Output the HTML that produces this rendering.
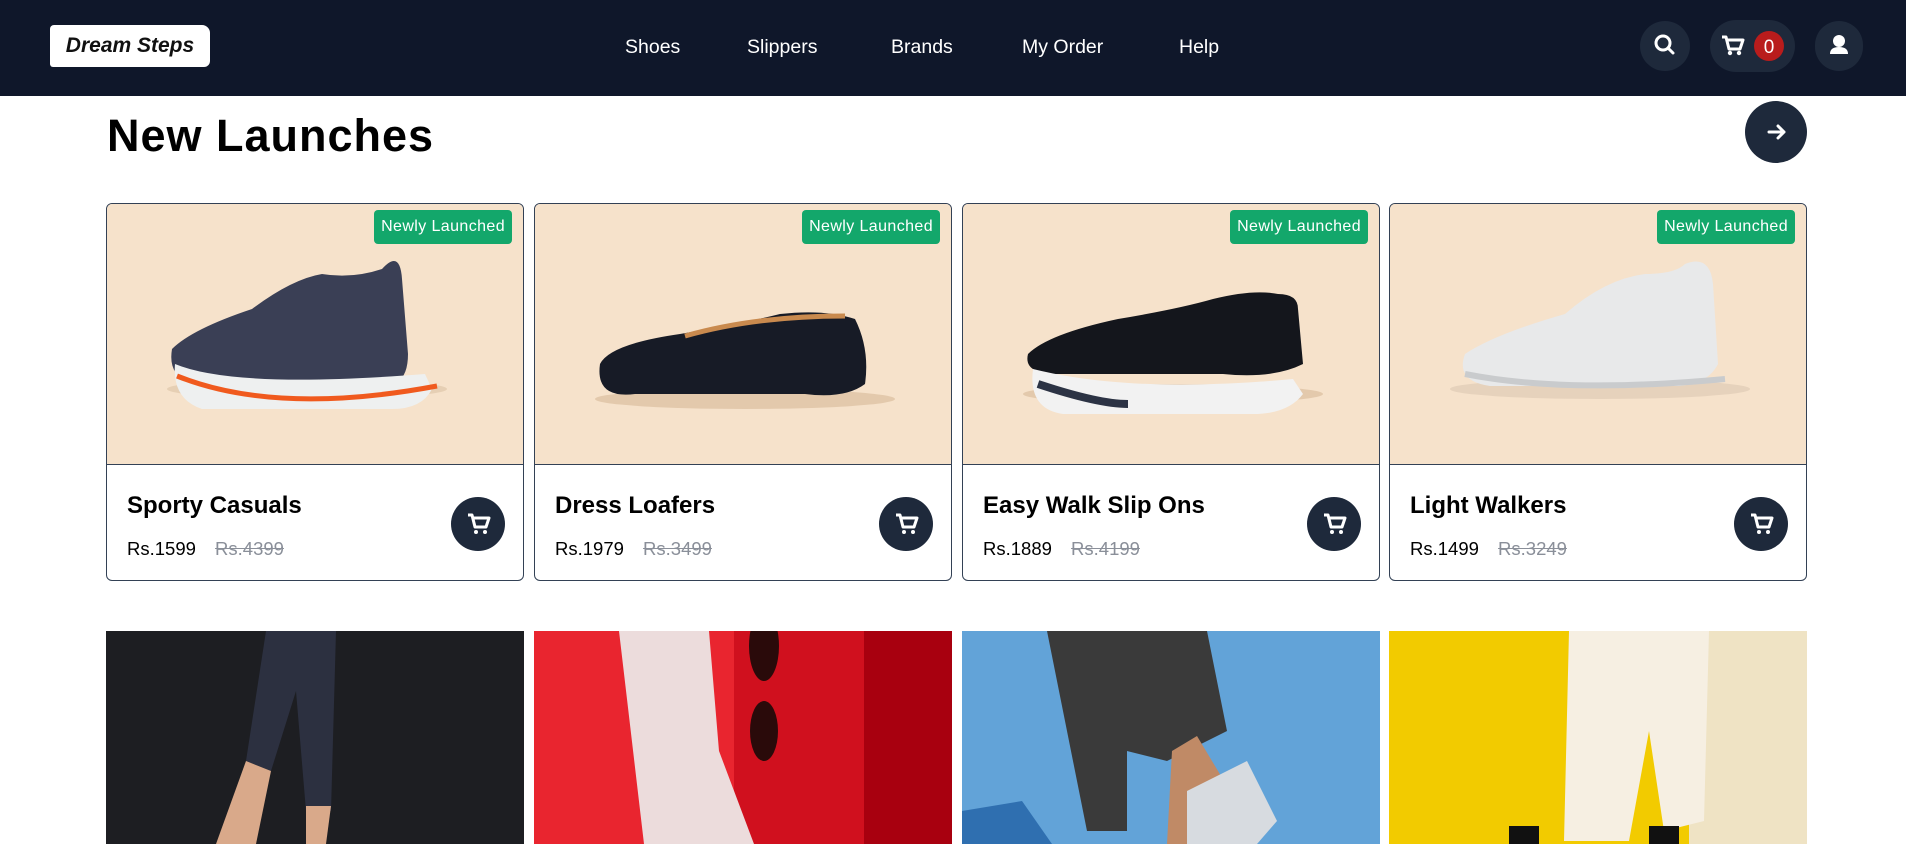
<!DOCTYPE html>
<html><head><meta charset="utf-8"><style>
*{margin:0;padding:0;box-sizing:border-box}
body{width:1906px;height:844px;overflow:hidden;background:#fff;font-family:"Liberation Sans",sans-serif;position:relative}
.hdr{position:absolute;left:0;top:0;width:1906px;height:96px;background:#0f172a}
.logo{position:absolute;left:50px;top:25px;width:160px;height:42px;background:#fff;border-radius:4px 8px 6px 3px;font:italic bold 21px "Liberation Sans",sans-serif;color:#111;text-align:center;line-height:42px}
.nav a{position:absolute;top:36px;color:#fff;font-size:19.5px;text-decoration:none}
.ic{position:absolute;background:#1e293b;border-radius:26px}
.ttl{position:absolute;left:107px;top:110px;font-size:45px;font-weight:bold;color:#000;letter-spacing:1px}
.arr{position:absolute;left:1745px;top:101px;width:62px;height:62px;border-radius:50%;background:#1e293b}
.card{position:absolute;top:203px;width:418px;height:378px;border:1px solid #334155;border-radius:6px;overflow:hidden}
.img{height:261px;background:#f6e2cb;border-bottom:1px solid #334155;position:relative}
.badge{position:absolute;right:11px;top:6px;height:34px;padding:0 7px;background:#13a76b;color:#fff;font-size:16px;line-height:34px;border-radius:4px;letter-spacing:.4px}
.name{position:absolute;left:20px;top:288px;font-size:24px;font-weight:bold;color:#000}
.pr{position:absolute;left:20px;top:334px;font-size:18.5px;color:#000}
.pr s{color:#8a8f99;margin-left:14px}
.cb{position:absolute;left:344px;top:293px;width:54px;height:54px;border-radius:50%;background:#1e293b}
.bot{position:absolute;top:631px;width:418px;height:213px;overflow:hidden}
</style></head><body>
<div class="hdr">
<div class="logo">Dream Steps</div>
<div class="nav"><a style="left:625px">Shoes</a><a style="left:747px">Slippers</a><a style="left:891px">Brands</a><a style="left:1022px">My Order</a><a style="left:1179px">Help</a></div>
<div class="ic" style="left:1640px;top:21px;width:50px;height:50px"><svg width="50" height="50"><circle cx="23" cy="22" r="7" fill="none" stroke="#fff" stroke-width="3"/><line x1="28" y1="27" x2="33" y2="32" stroke="#fff" stroke-width="3" stroke-linecap="round"/></svg></div>
<div class="ic" style="left:1710px;top:20px;width:85px;height:52px"><svg width="85" height="52"><path d="M12 17h4l3 12h11l3-9H18" fill="none" stroke="#fff" stroke-width="3" stroke-linejoin="round"/><circle cx="20" cy="33" r="2.2" fill="#fff"/><circle cx="29" cy="33" r="2.2" fill="#fff"/><circle cx="59" cy="26" r="15" fill="#b91c1c"/><text x="59" y="33" fill="#fff" font-size="19" text-anchor="middle" font-family="Liberation Sans">0</text></svg></div>
<div class="ic" style="left:1815px;top:21px;width:48px;height:50px"><svg width="48" height="50"><circle cx="24" cy="20" r="6" fill="#fff"/><path d="M15 33q0-7 9-7t9 7z" fill="#fff"/></svg></div>
</div>
<div class="ttl">New Launches</div>
<div class="arr"><svg width="62" height="62"><path d="M24 31h15M33 25l6 6-6 6" fill="none" stroke="#fff" stroke-width="3" stroke-linecap="round" stroke-linejoin="round"/></svg></div>

<div class="card" style="left:106px"><div class="img"><span class="badge">Newly Launched</span>
<svg width="418" height="261" style="position:absolute;left:0;top:0"><ellipse cx="200" cy="185" rx="140" ry="10" fill="#e6cfb4"/><path d="M65 145q20-20 80-40q40-30 70-35q30 5 60-5q18-20 20 10l6 75q0 25-15 30H90q-30-5-25-35z" fill="#3a3f55"/><path d="M68 160q60 25 250 10l7 15q-10 20-40 20H95q-30-10-27-45z" fill="#eef0f0"/><path d="M70 172q100 40 260 10" stroke="#f05a1e" stroke-width="5" fill="none"/></svg></div>
<div class="name">Sporty Casuals</div><div class="pr">Rs.1599 <s>Rs.4399</s></div>
<div class="cb"><svg width="54" height="54"><path d="M17 18h4l3 12h11l3-9H22" fill="none" stroke="#fff" stroke-width="3" stroke-linejoin="round"/><circle cx="25" cy="35" r="2" fill="#fff"/><circle cx="34" cy="35" r="2" fill="#fff"/></svg></div></div>

<div class="card" style="left:534px"><div class="img"><span class="badge">Newly Launched</span>
<svg width="418" height="261" style="position:absolute;left:0;top:0"><ellipse cx="210" cy="195" rx="150" ry="10" fill="#e3c9ac"/><path d="M65 160q10-20 80-30q60-10 100-20q45-5 75 5q15 30 10 65q-20 15-60 10H100q-40 5-35-30z" fill="#171b26"/><path d="M150 132q70-20 160-20" stroke="#c98a4e" stroke-width="5" fill="none"/></svg></div>
<div class="name">Dress Loafers</div><div class="pr">Rs.1979 <s>Rs.3499</s></div>
<div class="cb"><svg width="54" height="54"><path d="M17 18h4l3 12h11l3-9H22" fill="none" stroke="#fff" stroke-width="3" stroke-linejoin="round"/><circle cx="25" cy="35" r="2" fill="#fff"/><circle cx="34" cy="35" r="2" fill="#fff"/></svg></div></div>

<div class="card" style="left:962px"><div class="img"><span class="badge">Newly Launched</span>
<svg width="418" height="261" style="position:absolute;left:0;top:0"><ellipse cx="210" cy="190" rx="150" ry="10" fill="#e3c9ac"/><path d="M65 150q20-20 90-35q60-10 95-20q40-10 65-5q20 0 20 15l5 55q-30 15-80 10H95q-35 0-30-20z" fill="#14161c"/><path d="M70 165q100 25 260 10l10 15q-15 20-50 20H100q-35-5-30-45z" fill="#f2f2f2"/><path d="M75 180q60 20 90 20" stroke="#2c3344" stroke-width="8" fill="none"/></svg></div>
<div class="name">Easy Walk Slip Ons</div><div class="pr">Rs.1889 <s>Rs.4199</s></div>
<div class="cb"><svg width="54" height="54"><path d="M17 18h4l3 12h11l3-9H22" fill="none" stroke="#fff" stroke-width="3" stroke-linejoin="round"/><circle cx="25" cy="35" r="2" fill="#fff"/><circle cx="34" cy="35" r="2" fill="#fff"/></svg></div></div>

<div class="card" style="left:1389px"><div class="img"><span class="badge">Newly Launched</span>
<svg width="418" height="261" style="position:absolute;left:0;top:0"><ellipse cx="210" cy="185" rx="150" ry="10" fill="#e6d2bc"/><path d="M75 150q30-20 100-40q40-35 80-40q30 0 40-10q25-10 28 20l5 80q-10 20-40 22H100q-35-5-25-32z" fill="#e8e9ea"/><path d="M75 170q100 20 260 5" stroke="#c9cbcd" stroke-width="6" fill="none"/></svg></div>
<div class="name">Light Walkers</div><div class="pr">Rs.1499 <s>Rs.3249</s></div>
<div class="cb"><svg width="54" height="54"><path d="M17 18h4l3 12h11l3-9H22" fill="none" stroke="#fff" stroke-width="3" stroke-linejoin="round"/><circle cx="25" cy="35" r="2" fill="#fff"/><circle cx="34" cy="35" r="2" fill="#fff"/></svg></div></div>

<div class="bot" style="left:106px;background:#1d1e22"><svg width="418" height="213"><path d="M160 0h70l-5 180-25 0-10-120-25 80-25-10z" fill="#2c3040"/><path d="M140 130l25 10-15 73h-40z" fill="#d9a98a"/><path d="M200 175h25l-5 38h-20z" fill="#d9a98a"/></svg></div>
<div class="bot" style="left:534px;background:#e9252f"><svg width="418" height="213"><rect x="200" y="0" width="218" height="213" fill="#d0101e"/><rect x="330" y="0" width="88" height="213" fill="#a8000f"/><ellipse cx="230" cy="15" rx="15" ry="35" fill="#2a0a0a"/><ellipse cx="230" cy="100" rx="14" ry="30" fill="#2a0a0a"/><path d="M85 0h90l10 120 35 93H110z" fill="#ecdcdc"/></svg></div>
<div class="bot" style="left:962px;background:#62a3d8"><svg width="418" height="213"><path d="M85 0h160l20 100-60 30-40-10 0 80-40 0z" fill="#3a3a3a"/><path d="M210 120l25-15 30 50-40 58h-20z" fill="#c08a66"/><path d="M225 160l60-30 30 60-20 23h-70z" fill="#d7dbe0"/><path d="M0 180l60-10 30 43H0z" fill="#2f6fb0"/></svg></div>
<div class="bot" style="left:1389px;background:#f2cb00"><svg width="418" height="213"><rect x="300" y="0" width="118" height="213" fill="#efe3c4"/><path d="M180 0h140l-5 190-40 10-15-100-20 110h-65z" fill="#f6efe2"/><rect x="120" y="195" width="30" height="18" fill="#111"/><rect x="260" y="195" width="30" height="18" fill="#111"/></svg></div>
</body></html>
